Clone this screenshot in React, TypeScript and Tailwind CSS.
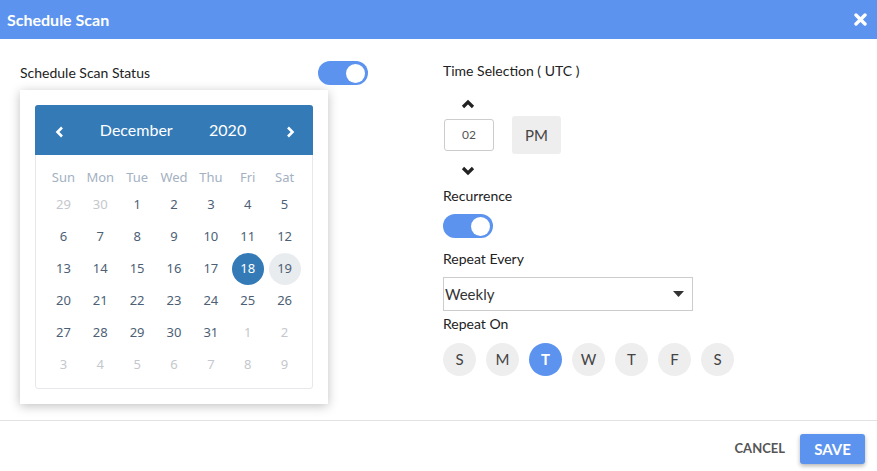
import { useState } from 'react';

const weekNames = ['Sun', 'Mon', 'Tue', 'Wed', 'Thu', 'Fri', 'Sat'];

type Cell = { day: number; muted?: boolean };

const weeks: Cell[][] = [
  [{ day: 29, muted: true }, { day: 30, muted: true }, { day: 1 }, { day: 2 }, { day: 3 }, { day: 4 }, { day: 5 }],
  [{ day: 6 }, { day: 7 }, { day: 8 }, { day: 9 }, { day: 10 }, { day: 11 }, { day: 12 }],
  [{ day: 13 }, { day: 14 }, { day: 15 }, { day: 16 }, { day: 17 }, { day: 18 }, { day: 19 }],
  [{ day: 20 }, { day: 21 }, { day: 22 }, { day: 23 }, { day: 24 }, { day: 25 }, { day: 26 }],
  [{ day: 27 }, { day: 28 }, { day: 29 }, { day: 30 }, { day: 31 }, { day: 1, muted: true }, { day: 2, muted: true }],
  [3, 4, 5, 6, 7, 8, 9].map((d) => ({ day: d, muted: true })),
];

const repeatDays = ['S', 'M', 'T', 'W', 'T', 'F', 'S'];

function Toggle({ on, onChange }: { on: boolean; onChange: () => void }) {
  return (
    <button
      onClick={onChange}
      className={`w-[50px] h-[24px] rounded-full flex items-center px-[3px] ${on ? 'bg-[#5b93ef] justify-end' : 'bg-[#ccc] justify-start'}`}
    >
      <span className="w-[19px] h-[19px] rounded-full bg-white" />
    </button>
  );
}

function Chevron({ up }: { up?: boolean }) {
  return (
    <svg width="14" height="10" viewBox="0 0 14 10">
      <path
        d={up ? 'M2 8 L7 3 L12 8' : 'M2 2 L7 7 L12 2'}
        fill="none"
        stroke="#222"
        strokeWidth="3.2"
      />
    </svg>
  );
}

function NavArrow({ right }: { right?: boolean }) {
  return (
    <svg width="10" height="12" viewBox="0 0 10 12">
      <path
        d={right ? 'M3 1.5 L7.5 6 L3 10.5' : 'M7 1.5 L2.5 6 L7 10.5'}
        fill="none"
        stroke="white"
        strokeWidth="2.6"
      />
    </svg>
  );
}

function Calendar() {
  const [selected, setSelected] = useState(18);
  return (
    <div className="w-[308px] bg-white p-[15px] shadow-[0_2px_10px_rgba(0,0,0,0.25)]">
      <div className="border border-[#e6e8eb] rounded-[3px]">
        <div className="h-[50px] bg-[#337ab7] rounded-t-[3px] flex items-center text-white -mx-px -mt-px">
          <span className="w-[50px] flex justify-center pt-[3px] pl-[1px]">
            <NavArrow />
          </span>
          <span className="w-[104px] text-center text-[16px]">December</span>
          <span className="w-[80px] text-center text-[16px]">2020</span>
          <span className="w-[46px] flex justify-center pt-[3px]">
            <NavArrow right />
          </span>
        </div>
        <div className="px-[9px] pt-[12px] pb-[7px] font-['Noto_Sans',sans-serif] text-[13px]">
          <div className="grid grid-cols-7 h-[22px] items-center text-[#a3b1c2]">
            {weekNames.map((n) => (
              <span key={n} className="text-center">{n}</span>
            ))}
          </div>
          {weeks.map((w, i) => (
            <div key={i} className="grid grid-cols-7 h-[32px] items-center first:mt-[4px]">
              {w.map((c, j) => {
                const isSel = !c.muted && c.day === selected;
                const isNext = !c.muted && c.day === 19;
                return (
                  <div key={j} className="flex justify-center">
                    <button
                      onClick={() => !c.muted && setSelected(c.day)}
                      className={`w-[32px] h-[32px] rounded-full flex items-center justify-center ${
                        isSel
                          ? 'bg-[#337ab7] text-white'
                          : isNext
                            ? 'bg-[#e9ecef] text-[#4d5f75]'
                            : c.muted
                              ? 'text-[#c4c8cc]'
                              : 'text-[#4d5f75]'
                      }`}
                    >
                      {c.day}
                    </button>
                  </div>
                );
              })}
            </div>
          ))}
        </div>
      </div>
    </div>
  );
}

export default function App() {
  const [status, setStatus] = useState(true);
  const [recurrence, setRecurrence] = useState(true);
  const [activeDay, setActiveDay] = useState(2);

  return (
    <div className="w-[877px] h-[471px] bg-white flex flex-col font-['Lato',sans-serif] text-[#333]">
      {/* Header */}
      <div className="h-[39px] bg-[#5b93ef] flex items-center justify-between pl-[7px] pr-[10px]">
        <h1 className="text-white text-[16px] font-bold">Schedule Scan</h1>
        <button className="w-[14px] h-[14px] flex items-center justify-center">
          <svg width="13" height="13" viewBox="0 0 13 13">
            <path d="M2 2 L11 11 M11 2 L2 11" stroke="white" strokeWidth="3.4" strokeLinecap="round" />
          </svg>
        </button>
      </div>

      {/* Body */}
      <div className="flex-1 flex border-b border-[#e2e2e2]">
        <div className="w-[443px] pl-[20px] pt-[22px]">
          <div className="w-[348px] flex justify-between items-start">
            <span className="text-[14px] text-[#222] mt-[1px]">Schedule Scan Status</span>
            <Toggle on={status} onChange={() => setStatus(!status)} />
          </div>
          <div className="mt-[5px]">
            <Calendar />
          </div>
        </div>

        <div className="flex-1 pt-[22px]">
          <div className="text-[14px] text-[#222] leading-[18px] mt-[1px]">Time Selection ( UTC )</div>
          <div className="flex flex-col items-start">
            <div className="w-[50px] flex justify-center mt-[19px]">
              <Chevron up />
            </div>
            <div className="flex items-center gap-[18px] mt-[7px]">
              <div className="ml-px w-[50px] h-[32px] border border-[#ccc] rounded-[3px] flex items-center justify-center text-[12px] text-[#555]">
                02
              </div>
              <div className="w-[49px] h-[38px] bg-[#eee] rounded-[3px] flex items-center justify-center text-[15px] text-[#444]">
                PM
              </div>
            </div>
            <div className="w-[50px] flex justify-center mt-[12px]">
              <Chevron />
            </div>
          </div>
          <div className="text-[14px] text-[#222] leading-[18px] mt-[11px]">Recurrence</div>
          <div className="mt-[9px] flex">
            <Toggle on={recurrence} onChange={() => setRecurrence(!recurrence)} />
          </div>
          <div className="text-[14px] text-[#222] leading-[18px] mt-[12px]">Repeat Every</div>
          <div className="mt-[9px] w-[250px] h-[34px] border border-[#ccc] flex items-center justify-between pl-[1px] pr-[8px]">
            <span className="text-[15px] text-[#333]">Weekly</span>
            <svg width="11" height="6" viewBox="0 0 11 6">
              <path d="M0 0 L11 0 L5.5 6 Z" fill="#333" />
            </svg>
          </div>
          <div className="text-[14px] text-[#222] leading-[18px] mt-[4px]">Repeat On</div>
          <div className="flex gap-[10px] mt-[10px]">
            {repeatDays.map((d, i) => (
              <button
                key={i}
                onClick={() => setActiveDay(i)}
                className={`w-[33px] h-[33px] rounded-full flex items-center justify-center text-[15px] ${
                  activeDay === i ? 'bg-[#5b93ef] text-white font-bold' : 'bg-[#eee] text-[#444]'
                }`}
              >
                {d}
              </button>
            ))}
          </div>
        </div>
      </div>

      {/* Footer */}
      <div className="h-[50px] flex items-center justify-end gap-[15px] pr-[12px] pt-[6px]">
        <button className="text-[13px] font-bold text-[#555]">CANCEL</button>
        <button className="w-[65px] h-[30px] bg-[#5b93ef] text-white text-[15px] font-bold rounded-[3px] shadow-[0_2px_4px_rgba(0,0,0,0.3)]">
          SAVE
        </button>
      </div>
    </div>
  );
}
